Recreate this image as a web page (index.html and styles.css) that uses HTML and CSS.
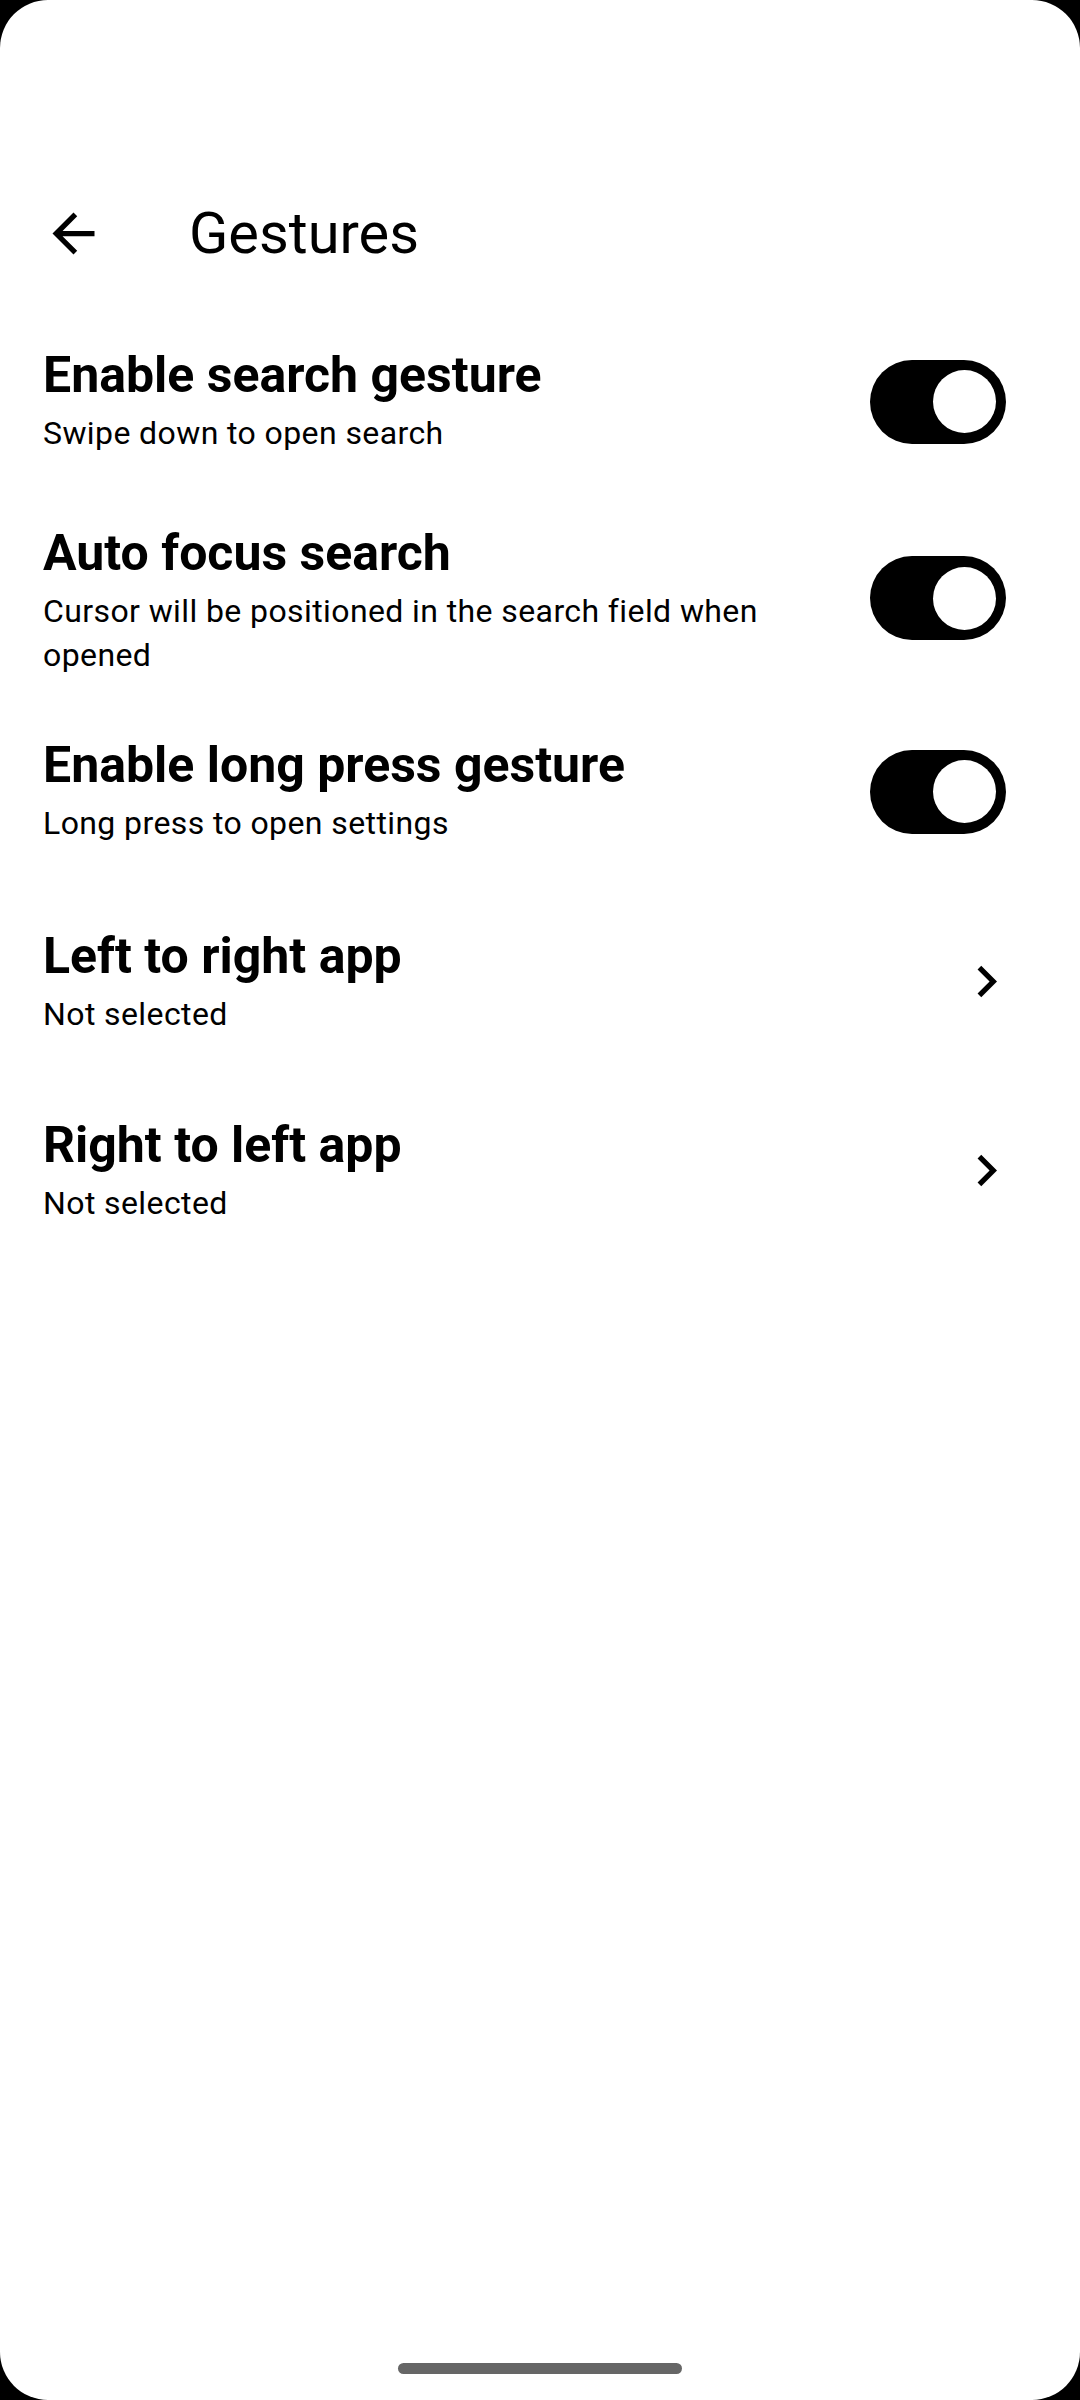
FILE: index.html
```html
<!DOCTYPE html>
<html lang="en">
<head>
<meta charset="utf-8">
<title>Gestures</title>
<link rel="stylesheet" href="styles.css">
</head>
<body>
<div class="screen">
  <header class="appbar">
    <div class="nav-btn">
      <svg class="icon" viewBox="0 0 24 24"><path d="M20 11H7.83l5.59-5.59L12 4l-8 8 8 8 1.41-1.41L7.83 13H20v-2z"/></svg>
    </div>
    <h1 class="appbar-title">Gestures</h1>
  </header>

  <main class="list">
    <div class="row row-switch">
      <div class="row-text">
        <div class="row-title">Enable search gesture</div>
        <div class="row-sub">Swipe down to open search</div>
      </div>
      <div class="switch on"><span class="knob"></span></div>
    </div>

    <div class="row row-switch row-tall">
      <div class="row-text">
        <div class="row-title">Auto focus search</div>
        <div class="row-sub">Cursor will be positioned in the search field when opened</div>
      </div>
      <div class="switch on"><span class="knob"></span></div>
    </div>

    <div class="row row-switch">
      <div class="row-text">
        <div class="row-title">Enable long press gesture</div>
        <div class="row-sub">Long press to open settings</div>
      </div>
      <div class="switch on"><span class="knob"></span></div>
    </div>

    <div class="row row-link">
      <div class="row-text">
        <div class="row-title">Left to right app</div>
        <div class="row-sub">Not selected</div>
      </div>
      <div class="chev">
        <svg class="icon" viewBox="0 0 24 24"><path d="M10 6L8.59 7.41 13.17 12l-4.58 4.59L10 18l6-6z"/></svg>
      </div>
    </div>

    <div class="row row-link">
      <div class="row-text">
        <div class="row-title">Right to left app</div>
        <div class="row-sub">Not selected</div>
      </div>
      <div class="chev">
        <svg class="icon" viewBox="0 0 24 24"><path d="M10 6L8.59 7.41 13.17 12l-4.58 4.59L10 18l6-6z"/></svg>
      </div>
    </div>
  </main>

  <div class="home-indicator"></div>
</div>
</body>
</html>
```

FILE: styles.css
```css
html, body {
  margin: 0;
  padding: 0;
  background: #000;
}

body {
  font-family: Roboto, "Noto Sans", "Liberation Sans", sans-serif;
  color: #000;
}

.screen {
  position: relative;
  width: 1080px;
  height: 2400px;
  background: #fff;
  border-radius: 48px;
  overflow: hidden;
  padding-top: 149px;
  box-sizing: border-box;
}

.appbar {
  display: flex;
  align-items: center;
  height: 168px;
  padding-left: 42px;
}

.nav-btn {
  width: 63px;
  height: 63px;
  display: flex;
  align-items: center;
  justify-content: center;
}

.icon {
  width: 63px;
  height: 63px;
  fill: #000;
  display: block;
}

.appbar-title {
  margin: 0 0 0 84px;
  font-size: 57.75px;
  font-weight: 400;
  line-height: 72px;
  color: #000;
}

.list {
  display: flex;
  flex-direction: column;
}

.row {
  display: flex;
  align-items: center;
  padding-left: 43px;
  padding-right: 42px;
}

.row-switch {
  padding-top: 28px;
  padding-bottom: 40px;
}

.row-switch.row-tall {
  padding-bottom: 30px;
}

.row-link {
  padding-top: 41px;
  padding-bottom: 38px;
}

.row-text {
  flex: 1;
  min-width: 0;
  margin-right: 37px;
}

.row-title {
  font-size: 50px;
  font-weight: 700;
  line-height: 60px;
}

.row-sub {
  margin-top: 6px;
  font-size: 32px;
  font-weight: 400;
  line-height: 44px;
  letter-spacing: 0.4px;
}

.switch {
  position: relative;
  width: 136px;
  height: 84px;
  border-radius: 42px;
  background: #000;
  margin-right: 32px;
  margin-top: 3px;
  flex: none;
}

.row-tall .switch {
  margin-top: -4px;
}

.switch .knob {
  position: absolute;
  top: 10.5px;
  right: 10.5px;
  width: 63px;
  height: 63px;
  border-radius: 50%;
  background: #fff;
}

.chev {
  flex: none;
  width: 63px;
  height: 63px;
  margin-right: 20px;
  margin-top: 0;
}

.home-indicator {
  position: absolute;
  left: 398px;
  bottom: 26px;
  width: 284px;
  height: 11px;
  border-radius: 6px;
  background: #666;
}
```
